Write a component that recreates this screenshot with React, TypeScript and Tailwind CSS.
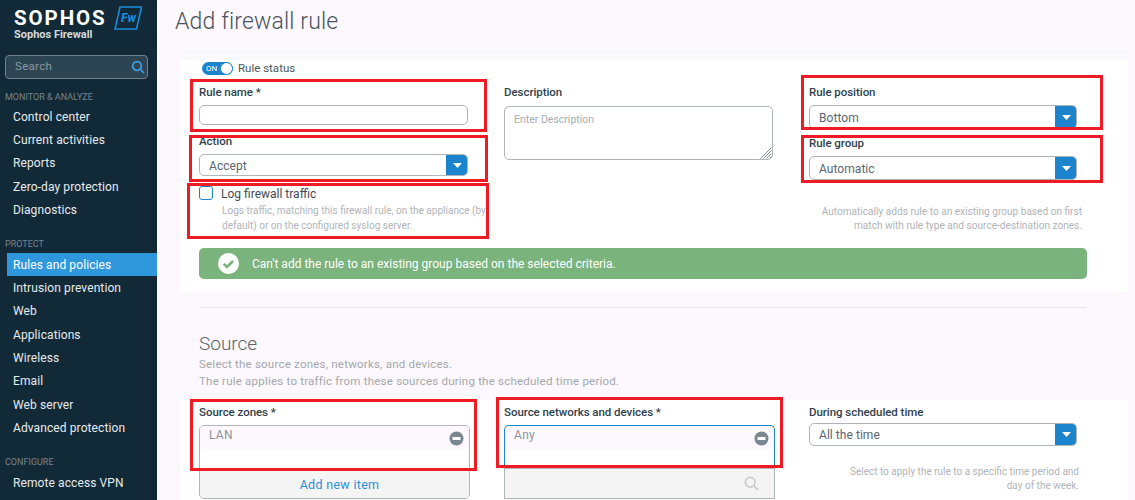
import React from "react";

const font = { fontFamily: '"Roboto", "Liberation Sans", sans-serif' };

function NavItem({ label, active }: { label: string; active?: boolean }) {
  return (
    <div className={active ? "h-[23px] ml-[7px] pl-[6px] flex items-center bg-[#2f97dc] text-white text-[12px] tracking-[0.1px]" : "h-[23.3px] ml-[7px] pl-[6px] flex items-center text-[#e6ebee] text-[12px] tracking-[0.1px]"}>
      {label}
    </div>
  );
}

function Heading({ label }: { label: string }) {
  return <div className="pl-[5px] text-[9px] leading-[12px] text-[#75858f]">{label}</div>;
}

function Label({ children }: { children: React.ReactNode }) {
  return <div className="text-[11.5px] leading-[14px] font-medium tracking-[-0.05px] text-[#2f3f4c]">{children}</div>;
}

function Select({ value, heightClass }: { value: string; heightClass: string }) {
  return (
    <div className={`${heightClass} flex border border-[#b0b5ba] rounded-[5px] bg-white overflow-hidden`}>
      <div className="flex-1 pl-[9px] pt-px flex items-center text-[12px] tracking-[0.05px] text-[#5a6570]">{value}</div>
      <div className="w-[22px] -my-px -mr-px bg-[#1b84cc] flex items-center justify-center">
        <svg width="9" height="5" viewBox="0 0 9 5"><path d="M0 0h9L4.5 5z" fill="#fff" /></svg>
      </div>
    </div>
  );
}

function MinusCircle() {
  return (
    <svg width="15" height="15" viewBox="0 0 15 15" className="shrink-0">
      <circle cx="7.5" cy="7.5" r="7" fill="#7a8791" />
      <rect x="3.5" y="6" width="8" height="3" rx="0.5" fill="#fff" />
    </svg>
  );
}

function RedBox({ className }: { className: string }) {
  return <div className={`absolute border-[3px] border-[#ed1c24] pointer-events-none ${className}`} />;
}

export default function App() {
  return (
    <div className="relative w-[1135px] h-[500px] overflow-hidden flex bg-[#fcf8fd]" style={font}>
      <aside className="w-[157px] h-full shrink-0 bg-[#122a38] overflow-hidden">
        <div className="pl-[14px] pt-[9px] h-[55px]">
          <div className="flex items-start">
            <span className="text-[20.5px] leading-[19px] font-bold text-white tracking-[1.9px]">SOPHOS</span>
            <svg width="28" height="24" viewBox="0 0 28 24" className="ml-[7px] -mt-[3px]">
              <path d="M6 1H27.5L22.5 23H1z" fill="none" stroke="#1a8fe0" strokeWidth="1.5" />
              <text x="7" y="16" fontSize="12" fontStyle="italic" fontWeight="700" fill="#1a8fe0">Fw</text>
            </svg>
          </div>
          <div className="text-[11px] leading-[14px] font-bold text-[#d3d9dd] -mt-[2px]">Sophos Firewall</div>
        </div>
        <div className="ml-[5px] w-[143px] h-[24px] border border-[#71808a] rounded-[4px] bg-[#2d4552] flex items-center justify-between pl-[9px] pr-[2px]">
          <span className="text-[11.5px] tracking-[0.3px] text-[#8b9aa4]">Search</span>
          <svg width="14" height="14" viewBox="0 0 14 14" fill="none" stroke="#3ea0e4" strokeWidth="1.7">
            <circle cx="6" cy="6" r="4.3" />
            <path d="M9 9l4 4" />
          </svg>
        </div>
        <div className="mt-[12px]"><Heading label="MONITOR & ANALYZE" /></div>
        <div className="mt-[2px]">
          <NavItem label="Control center" />
          <NavItem label="Current activities" />
          <NavItem label="Reports" />
          <NavItem label="Zero-day protection" />
          <NavItem label="Diagnostics" />
        </div>
        <div className="mt-[17px]"><Heading label="PROTECT" /></div>
        <div className="mt-[3px]">
          <NavItem label="Rules and policies" active />
          <NavItem label="Intrusion prevention" />
          <NavItem label="Web" />
          <NavItem label="Applications" />
          <NavItem label="Wireless" />
          <NavItem label="Email" />
          <NavItem label="Web server" />
          <NavItem label="Advanced protection" />
        </div>
        <div className="mt-[16px]"><Heading label="CONFIGURE" /></div>
        <div className="mt-[4px]">
          <NavItem label="Remote access VPN" />
        </div>
      </aside>

      <main className="flex-1 min-w-0">
        <h1 className="ml-[18px] pt-[8px] h-[51px] text-[23px] leading-[28px] font-light text-[#4a535c] tracking-[0.15px]">Add firewall rule</h1>

        <section className="ml-[23px] w-[948px] h-[241px] bg-white">
          <div className="h-[9px] bg-[#fafafe] border-t border-[#f3f3fa]" />
          <div className="pl-[19px] pt-[2px]">
            <div className="h-[13px] flex items-center">
              <div className="w-[31px] h-[13px] rounded-full bg-[#1b84cc] relative ml-[3px]">
                <span className="absolute left-[4px] top-0 text-[8px] leading-[13px] text-white">ON</span>
                <span className="absolute right-0 top-0 w-[13px] h-[13px] rounded-full bg-white border border-[#1b84cc]" />
              </div>
              <span className="ml-[5px] text-[11.5px] text-[#4a5761]">Rule status</span>
            </div>
            <div className="grid grid-cols-[269px_269px_268px] gap-x-[36px] mt-[10px]">
              <div>
                <Label>Rule name *</Label>
                <div className="mt-[6px] h-[20px] border border-[#b0b5ba] rounded-[5px] bg-white" />
                <div className="mt-[9px]"><Label>Action</Label></div>
                <div className="mt-[6px]"><Select value="Accept" heightClass="h-[22px]" /></div>
                <div className="mt-[10px] flex items-start">
                  <div className="w-[14px] h-[14px] border border-[#1b84cc] rounded-[3px] bg-white shrink-0" />
                  <div className="ml-[8px] pt-px text-[12px] leading-[14px] text-[#3f4a54]">Log firewall traffic</div>
                </div>
                <div className="ml-[23px] mt-[3px] w-[270px] text-[10.05px] leading-[14.5px] text-[#b1b4b8] whitespace-nowrap">
                  Logs traffic, matching this firewall rule, on the appliance (by<br />default) or on the configured syslog server.
                </div>
              </div>
              <div>
                <Label>Description</Label>
                <div className="mt-[7px] h-[54px] border border-[#b0b5ba] rounded-[5px] pl-[9px] pt-[5px] text-[10.5px] text-[#a8adb2] relative">
                  Enter Description
                  <svg width="12" height="12" viewBox="0 0 12 12" className="absolute right-0 bottom-0" stroke="#8a8f94" strokeWidth="1">
                    <path d="M11.5 .5L.5 11.5M11.5 3.5L3.5 11.5M11.5 6.5L6.5 11.5M11.5 9.5L9.5 11.5" />
                  </svg>
                </div>
              </div>
              <div>
                <Label>Rule position</Label>
                <div className="mt-[6px]"><Select value="Bottom" heightClass="h-[24px]" /></div>
                <div className="mt-[7px]"><Label>Rule group</Label></div>
                <div className="mt-[6px]"><Select value="Automatic" heightClass="h-[24px]" /></div>
                <div className="mt-[25px] w-[273px] text-right text-[10.1px] leading-[14px] text-[#b1b4b8] whitespace-nowrap">
                  Automatically adds rule to an existing group based on first<br />match with rule type and source-destination zones.
                </div>
              </div>
            </div>
            <div className="mt-[15px] w-[888px] h-[31px] rounded-[5px] bg-[#7ab37b] flex items-center pl-[19px]">
              <svg width="21" height="21" viewBox="0 0 21 21">
                <circle cx="10.5" cy="10.5" r="10.5" fill="#fff" />
                <path d="M5.8 10.8l3.2 3.2 6-6" fill="none" stroke="#7ab37b" strokeWidth="2.6" />
              </svg>
              <span className="ml-[13px] text-[12px] text-white">Can't add the rule to an existing group based on the selected criteria.</span>
            </div>
          </div>
        </section>

        <div className="ml-[42px] w-[887px] h-px mt-[15px] bg-[#e3e3e8]" />

        <div className="ml-[42px] mt-[25px]">
          <div className="text-[19px] leading-[22px] font-light text-[#5b6268]">Source</div>
          <div className="mt-[1px] text-[11.5px] leading-[17px] tracking-[0.22px] text-[#a4a8ac]">
            Select the source zones, networks, and devices.<br />The rule applies to traffic from these sources during the scheduled time period.
          </div>
        </div>

        <section className="ml-[23px] mt-[10px] w-[948px] h-[100px] bg-white pl-[19px] pt-[5px]">
          <div className="grid grid-cols-[271px_271px_268px] gap-x-[34px]">
            <div>
              <Label>Source zones *</Label>
              <div className="mt-[6px] border border-[#b0b5ba] rounded-[5px] overflow-hidden">
                <div className="h-[24px] bg-[#fcf8fd] pl-[9px] pr-[5px] flex justify-between text-[12px] text-[#8c9298] tracking-[0.3px]">
                  <span>LAN</span>
                  <span className="mt-[5px]"><MinusCircle /></span>
                </div>
                <div className="h-[20px] bg-white" />
                <div className="h-[28px] pt-px bg-[#f4f4f4] border-t border-[#b0b5ba] flex items-center justify-center pl-[10px] text-[12.5px] tracking-[0.3px] text-[#2f8fd6]">Add new item</div>
              </div>
            </div>
            <div>
              <Label>Source networks and devices *</Label>
              <div className="mt-[6px] h-[43px] border border-b-0 border-[#1b84cc] rounded-t-[5px]">
                <div className="h-[24px] bg-[#fcf8fd] rounded-t-[5px] pl-[9px] pr-[5px] flex justify-between text-[12px] text-[#8c9298] tracking-[0.3px]">
                  <span>Any</span>
                  <span className="mt-[5px]"><MinusCircle /></span>
                </div>
              </div>
              <div className="h-[31px] bg-[#f4f4f4] border border-[#b0b5ba] flex items-center justify-end pr-[15px]">
                <svg width="15" height="15" viewBox="0 0 15 15" fill="none" stroke="#c9cbcd" strokeWidth="1.8">
                  <circle cx="6.2" cy="6.2" r="4.8" />
                  <path d="M9.8 9.8l4.2 4.2" />
                </svg>
              </div>
            </div>
            <div>
              <Label>During scheduled time</Label>
              <div className="mt-[4px]"><Select value="All the time" heightClass="h-[23px]" /></div>
              <div className="mt-[19px] w-[270px] text-right text-[10px] leading-[14px] text-[#b1b4b8] whitespace-nowrap">
                Select to apply the rule to a specific time period and<br />day of the week.
              </div>
            </div>
          </div>
        </section>
      </main>

      <RedBox className="left-[190px] top-[79px] w-[297px] h-[53px]" />
      <RedBox className="left-[189px] top-[135px] w-[299px] h-[47px]" />
      <RedBox className="left-[187px] top-[183px] w-[302px] h-[56px]" />
      <RedBox className="left-[801px] top-[75px] w-[302px] h-[55px]" />
      <RedBox className="left-[801px] top-[135px] w-[302px] h-[48px]" />
      <RedBox className="left-[190px] top-[399px] w-[287px] h-[72px]" />
      <RedBox className="left-[496px] top-[397px] w-[287px] h-[71px]" />
    </div>
  );
}
